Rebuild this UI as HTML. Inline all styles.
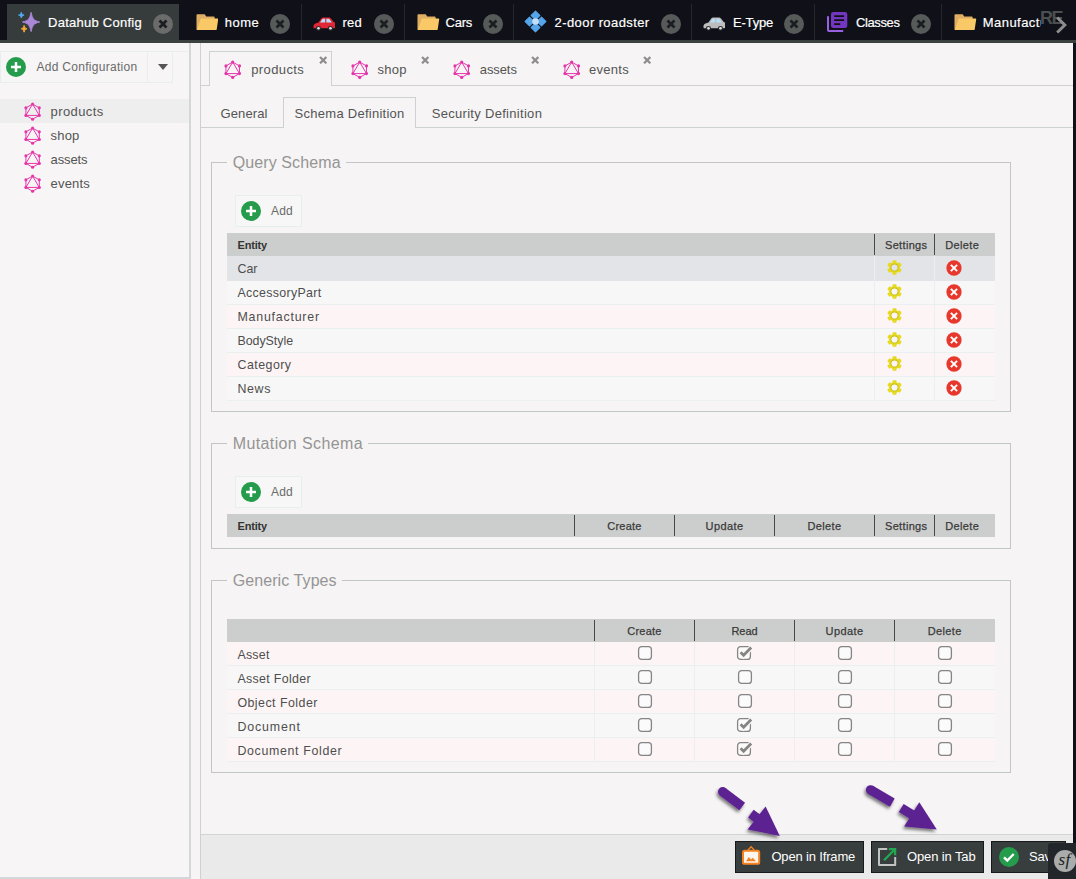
<!DOCTYPE html>
<html lang="en"><head><meta charset="utf-8"><title>Datahub Config</title>
<style>
html,body{margin:0;padding:0}
body{width:1076px;height:879px;position:relative;overflow:hidden;background:#f6f4f4;font-family:"Liberation Sans",sans-serif}
.ab{position:absolute;display:block}
.t{position:absolute;white-space:nowrap;line-height:1;margin:0;padding:0}
.sb{-webkit-text-stroke:0.25px currentColor}
.sb2{-webkit-text-stroke:0.18px currentColor}
.serif{font-family:"Liberation Serif",serif;font-style:italic}
</style></head>
<body>
<div class="ab" style="left:0;top:0;width:1076px;height:40px;background:#0f1018"></div>
<div class="ab" style="left:7px;top:4px;width:172px;height:37px;background:#363c3b"></div>
<div class="ab" style="left:0;top:40px;width:1076px;height:3px;background:#3a413f"></div>
<svg class="ab" style="left:17px;top:10px" width="25" height="24" viewBox="0 0 25 24"><path d="M14.10 2.40C15.60 9.12 16.68 10.50 22.70 12.00C16.68 13.50 15.60 14.88 14.10 21.60C12.60 14.88 11.52 13.50 5.50 12.00C11.52 10.50 12.60 9.12 14.10 2.40z" fill="#aa87d7" stroke="#aa87d7" stroke-width="1" stroke-linejoin="round"/><path d="M4.30 2.20C4.90 4.23 5.14 4.50 7.10 5.10C5.14 5.70 4.90 5.97 4.30 8.00C3.70 5.97 3.46 5.70 1.50 5.10C3.46 4.50 3.70 4.23 4.30 2.20z" fill="#55aaf0" stroke="#55aaf0" stroke-width="0.9" stroke-linejoin="round"/><path d="M7.10 15.40C7.80 17.78 7.94 18.10 9.90 18.80C7.94 19.50 7.80 19.82 7.10 22.20C6.40 19.82 6.26 19.50 4.30 18.80C6.26 18.10 6.40 17.78 7.10 15.40z" fill="#faaa32" stroke="#faaa32" stroke-width="1" stroke-linejoin="round"/></svg>
<span class="t sb2" style="left:48.00px;top:16px;font-size:13px;color:#fff;letter-spacing:0.261px">Datahub Config</span>
<svg class="ab" style="left:153px;top:14px" width="20" height="20" viewBox="0 0 20 20"><circle cx="10" cy="10" r="10" fill="#6a6b6a"/><path d="M6.500 6.500l7 7M13.500 6.500l-7 7" stroke="#1b1d20" stroke-width="2.700" fill="none"/></svg>
<div class="ab" style="left:301.0px;top:4px;width:1px;height:36px;background:#24272c"></div>
<div class="ab" style="left:404.0px;top:4px;width:1px;height:36px;background:#24272c"></div>
<div class="ab" style="left:513.0px;top:4px;width:1px;height:36px;background:#24272c"></div>
<div class="ab" style="left:691.0px;top:4px;width:1px;height:36px;background:#24272c"></div>
<div class="ab" style="left:814.0px;top:4px;width:1px;height:36px;background:#24272c"></div>
<div class="ab" style="left:941.0px;top:4px;width:1px;height:36px;background:#24272c"></div>
<svg class="ab" style="left:195.6px;top:13.7px" width="22.600" height="16.400" viewBox="0 0 23 17" preserveAspectRatio="none"><path d="M1.500 0.300h7.400l1.500 2.300h7.600a1 1 0 0 1 1 1v12.300a0.800 0.800 0 0 1-0.800 0.800h-16.900a0.800 0.800 0 0 1-0.800-0.800v-14.600a1 1 0 0 1 1-1z" fill="#dfad63"/><path d="M5.600 4.600h16.200a0.800 0.800 0 0 1 0.800 0.900l-1.500 10.400a1 1 0 0 1-1 0.800h-18.400a0.700 0.700 0 0 1-0.700-0.900l3.600-10.400a1.100 1.100 0 0 1 1-0.800z" fill="#f8c966"/></svg>
<span class="t sb2" style="left:224.70px;top:16px;font-size:13px;color:#fff;letter-spacing:0.492px">home</span>
<svg class="ab" style="left:270px;top:14px" width="20" height="20" viewBox="0 0 20 20"><circle cx="10" cy="10" r="10" fill="#565b59"/><path d="M6.500 6.500l7 7M13.500 6.500l-7 7" stroke="#1b1d20" stroke-width="2.700" fill="none"/></svg>
<svg class="ab" style="left:312.7px;top:17.2px" width="22.600" height="13.800" viewBox="0 0 23 15" preserveAspectRatio="none"><path d="M0.600 11.600c-0.600-2.600 0.600-4.600 3.400-5.200l1.600-0.500 2.800-4.200c0.600-0.900 1.400-1.200 2.400-1.200h5c1.200 0 2 0.400 2.700 1.300l2.600 3.600c1.500 0.600 1.900 1.600 1.900 3.200v2.400c0 0.800-0.500 1.200-1.200 1.200h-20c-0.700 0-1.100-0.200-1.200-0.600z" fill="#e32636"/><path d="M7.200 6l2-3.300c0.300-0.500 0.700-0.700 1.300-0.700h1.900v4zM13.600 2h2.100c0.600 0 1 0.200 1.300 0.700l2.100 3.300h-5.500z" fill="#b7dff5"/><circle cx="5.600" cy="12.300" r="2.600" fill="#2b2f33"/><circle cx="5.600" cy="12.300" r="1.300" fill="#e6e6e6"/><circle cx="17.800" cy="12.300" r="2.600" fill="#2b2f33"/><circle cx="17.800" cy="12.300" r="1.300" fill="#e6e6e6"/></svg>
<span class="t sb2" style="left:342.50px;top:16px;font-size:13px;color:#fff;letter-spacing:0.234px">red</span>
<svg class="ab" style="left:374px;top:14px" width="20" height="20" viewBox="0 0 20 20"><circle cx="10" cy="10" r="10" fill="#565b59"/><path d="M6.500 6.500l7 7M13.500 6.500l-7 7" stroke="#1b1d20" stroke-width="2.700" fill="none"/></svg>
<svg class="ab" style="left:417.1px;top:13.7px" width="22.600" height="16.400" viewBox="0 0 23 17" preserveAspectRatio="none"><path d="M1.500 0.300h7.400l1.500 2.300h7.600a1 1 0 0 1 1 1v12.300a0.800 0.800 0 0 1-0.800 0.800h-16.900a0.800 0.800 0 0 1-0.800-0.800v-14.600a1 1 0 0 1 1-1z" fill="#dfad63"/><path d="M5.600 4.600h16.200a0.800 0.800 0 0 1 0.800 0.900l-1.500 10.400a1 1 0 0 1-1 0.800h-18.400a0.700 0.700 0 0 1-0.700-0.900l3.600-10.400a1.100 1.100 0 0 1 1-0.800z" fill="#f8c966"/></svg>
<span class="t sb2" style="left:445.60px;top:16px;font-size:13px;color:#fff;letter-spacing:-0.238px">Cars</span>
<svg class="ab" style="left:483px;top:14px" width="20" height="20" viewBox="0 0 20 20"><circle cx="10" cy="10" r="10" fill="#565b59"/><path d="M6.500 6.500l7 7M13.500 6.500l-7 7" stroke="#1b1d20" stroke-width="2.700" fill="none"/></svg>
<svg class="ab" style="left:524.200px;top:10.100px" width="23" height="23" viewBox="0 0 23 23"><g fill="#55a5eb" stroke="#55a5eb" stroke-width="1.200" stroke-linejoin="round"><path d="M11.500 1.200l4.300 4.300-4.300 4.300-4.300-4.300z"/><path d="M11.500 13.200l4.300 4.300-4.300 4.300-4.300-4.300z"/><path d="M5.500 7.200l4.300 4.300-4.300 4.300-4.300-4.300z"/><path d="M17.500 7.200l4.300 4.300-4.300 4.300-4.300-4.300z"/></g><circle cx="11.500" cy="11.500" r="3.300" fill="#c3def5"/></svg>
<span class="t sb2" style="left:554.60px;top:16px;font-size:13px;color:#fff;letter-spacing:0.407px">2-door roadster</span>
<svg class="ab" style="left:661px;top:14px" width="20" height="20" viewBox="0 0 20 20"><circle cx="10" cy="10" r="10" fill="#565b59"/><path d="M6.500 6.500l7 7M13.500 6.500l-7 7" stroke="#1b1d20" stroke-width="2.700" fill="none"/></svg>
<svg class="ab" style="left:702.7px;top:17.2px" width="22.600" height="13.800" viewBox="0 0 23 15" preserveAspectRatio="none"><path d="M0.600 11.600c-0.600-2.600 0.600-4.600 3.400-5.200l1.600-0.500 2.800-4.200c0.600-0.900 1.400-1.200 2.400-1.200h5c1.200 0 2 0.400 2.700 1.300l2.600 3.600c1.500 0.600 1.900 1.600 1.900 3.200v2.400c0 0.800-0.500 1.200-1.200 1.200h-20c-0.700 0-1.100-0.200-1.200-0.600z" fill="#bdbdbd"/><path d="M7.200 6l2-3.300c0.300-0.500 0.700-0.700 1.300-0.700h1.900v4zM13.600 2h2.100c0.600 0 1 0.200 1.300 0.700l2.100 3.300h-5.500z" fill="#b7dff5"/><circle cx="5.600" cy="12.300" r="2.600" fill="#2b2f33"/><circle cx="5.600" cy="12.300" r="1.300" fill="#e6e6e6"/><circle cx="17.800" cy="12.300" r="2.600" fill="#2b2f33"/><circle cx="17.800" cy="12.300" r="1.300" fill="#e6e6e6"/></svg>
<span class="t sb2" style="left:733.00px;top:16px;font-size:13px;color:#fff;letter-spacing:-0.198px">E-Type</span>
<svg class="ab" style="left:784px;top:14px" width="20" height="20" viewBox="0 0 20 20"><circle cx="10" cy="10" r="10" fill="#565b59"/><path d="M6.500 6.500l7 7M13.500 6.500l-7 7" stroke="#1b1d20" stroke-width="2.700" fill="none"/></svg>
<svg class="ab" style="left:826px;top:12px" width="22" height="21" viewBox="0 0 22 21"><path d="M2 4.200v13.800a1 1 0 0 0 1 1h14.200" fill="none" stroke="#9a60e2" stroke-width="2"/><rect x="5" y="0" width="16.300" height="16" rx="2.200" fill="#7236c0"/><path d="M8.200 4.100h9.900M8.200 8.100h9.900M8.200 12.100h6" stroke="#0d120e" stroke-width="1.700" fill="none"/></svg>
<span class="t sb2" style="left:856.00px;top:16px;font-size:13px;color:#fff;letter-spacing:-0.393px">Classes</span>
<svg class="ab" style="left:911px;top:14px" width="20" height="20" viewBox="0 0 20 20"><circle cx="10" cy="10" r="10" fill="#565b59"/><path d="M6.500 6.500l7 7M13.500 6.500l-7 7" stroke="#1b1d20" stroke-width="2.700" fill="none"/></svg>
<svg class="ab" style="left:954.1px;top:13.7px" width="22.600" height="16.400" viewBox="0 0 23 17" preserveAspectRatio="none"><path d="M1.500 0.300h7.400l1.500 2.300h7.600a1 1 0 0 1 1 1v12.300a0.800 0.800 0 0 1-0.800 0.800h-16.900a0.800 0.800 0 0 1-0.800-0.800v-14.600a1 1 0 0 1 1-1z" fill="#dfad63"/><path d="M5.600 4.600h16.200a0.800 0.800 0 0 1 0.800 0.900l-1.500 10.400a1 1 0 0 1-1 0.800h-18.400a0.700 0.700 0 0 1-0.700-0.900l3.600-10.400a1.100 1.100 0 0 1 1-0.800z" fill="#f8c966"/></svg>
<div class="ab" style="left:982px;top:10px;width:59px;height:24px;overflow:hidden"><span class="t sb2" style="left:0.80px;top:6px;font-size:13px;color:#fff;letter-spacing:0.451px">Manufacturer</span></div>
<span class="t" style="left:1040.00px;top:9px;font-size:18px;color:#4b4f50;font-weight:700;letter-spacing:-1.508px">RE</span>
<svg class="ab" style="left:1054px;top:15px" width="14" height="20" viewBox="0 0 14 20"><path d="M3.200 2.500l7.600 7.500-7.600 7.500" fill="none" stroke="#8c8f8f" stroke-width="3"/></svg>
<div class="ab" style="left:0;top:43px;width:1073px;height:836px;background:#f6f4f4"></div>
<div class="ab" style="left:1073px;top:43px;width:3px;height:836px;background:#0f1018"></div>
<div class="ab" style="left:0;top:43px;width:189px;height:834px;background:#f7f5f5;border-right:2px solid #d4d7d7;border-bottom:2px solid #d4d7d7"></div>
<div class="ab" style="left:0;top:51px;width:189px;height:1px;background:#ecece8"></div>
<div class="ab" style="left:0;top:51px;width:148px;height:32px;border:1px solid #e6eeee;box-sizing:border-box"></div>
<div class="ab" style="left:147px;top:51px;width:26px;height:32px;border:1px solid #e6eeee;box-sizing:border-box"></div>
<svg class="ab" style="left:6px;top:57px" width="20" height="20" viewBox="0 0 20 20"><circle cx="10" cy="10" r="10" fill="#249c4c"/><path d="M10 5v10M5 10h10" stroke="#fff" stroke-width="2.500" fill="none"/></svg>
<span class="t" style="left:36.50px;top:61px;font-size:12px;color:#6a6a6a;letter-spacing:0.290px">Add Configuration</span>
<svg class="ab" style="left:158px;top:64px" width="10" height="6" viewBox="0 0 10 6"><path d="M0 0h10l-5 6z" fill="#555"/></svg>
<div class="ab" style="left:0;top:99px;width:189px;height:24px;background:#eeeeee"></div>
<svg class="ab" style="left:23.90px;top:101.77px" width="17.2" height="19.26" viewBox="0 0 20 22.4"><g fill="none" stroke="#e535ab" stroke-width="1.15"><polygon points="10,2.4 17.800,6.800 17.800,15.600 10,20 2.200,15.600 2.200,6.800"/><polygon points="10,2.400 17.800,15.600 2.200,15.600"/></g><g fill="#e535ab"><circle cx="10" cy="2.400" r="1.800"/><circle cx="17.800" cy="6.800" r="1.800"/><circle cx="17.800" cy="15.600" r="1.800"/><circle cx="10" cy="20" r="1.800"/><circle cx="2.200" cy="15.600" r="1.800"/><circle cx="2.200" cy="6.800" r="1.800"/></g></svg>
<span class="t" style="left:50.50px;top:105px;font-size:13px;color:#545454;letter-spacing:0.416px">products</span>
<svg class="ab" style="left:23.90px;top:125.77px" width="17.2" height="19.26" viewBox="0 0 20 22.4"><g fill="none" stroke="#e535ab" stroke-width="1.15"><polygon points="10,2.4 17.800,6.800 17.800,15.600 10,20 2.200,15.600 2.200,6.800"/><polygon points="10,2.400 17.800,15.600 2.200,15.600"/></g><g fill="#e535ab"><circle cx="10" cy="2.400" r="1.800"/><circle cx="17.800" cy="6.800" r="1.800"/><circle cx="17.800" cy="15.600" r="1.800"/><circle cx="10" cy="20" r="1.800"/><circle cx="2.200" cy="15.600" r="1.800"/><circle cx="2.200" cy="6.800" r="1.800"/></g></svg>
<span class="t" style="left:50.50px;top:129px;font-size:13px;color:#545454;letter-spacing:0.199px">shop</span>
<svg class="ab" style="left:23.90px;top:149.77px" width="17.2" height="19.26" viewBox="0 0 20 22.4"><g fill="none" stroke="#e535ab" stroke-width="1.15"><polygon points="10,2.4 17.800,6.800 17.800,15.600 10,20 2.200,15.600 2.200,6.800"/><polygon points="10,2.400 17.800,15.600 2.200,15.600"/></g><g fill="#e535ab"><circle cx="10" cy="2.400" r="1.800"/><circle cx="17.800" cy="6.800" r="1.800"/><circle cx="17.800" cy="15.600" r="1.800"/><circle cx="10" cy="20" r="1.800"/><circle cx="2.200" cy="15.600" r="1.800"/><circle cx="2.200" cy="6.800" r="1.800"/></g></svg>
<span class="t" style="left:50.50px;top:153px;font-size:13px;color:#545454;letter-spacing:-0.096px">assets</span>
<svg class="ab" style="left:23.90px;top:173.77px" width="17.2" height="19.26" viewBox="0 0 20 22.4"><g fill="none" stroke="#e535ab" stroke-width="1.15"><polygon points="10,2.4 17.800,6.800 17.800,15.600 10,20 2.200,15.600 2.200,6.800"/><polygon points="10,2.400 17.800,15.600 2.200,15.600"/></g><g fill="#e535ab"><circle cx="10" cy="2.400" r="1.800"/><circle cx="17.800" cy="6.800" r="1.800"/><circle cx="17.800" cy="15.600" r="1.800"/><circle cx="10" cy="20" r="1.800"/><circle cx="2.200" cy="15.600" r="1.800"/><circle cx="2.200" cy="6.800" r="1.800"/></g></svg>
<span class="t" style="left:50.50px;top:177px;font-size:13px;color:#545454;letter-spacing:0.198px">events</span>
<div class="ab" style="left:200px;top:43px;width:1px;height:836px;background:#cdd1d1"></div>
<div class="ab" style="left:201px;top:85px;width:872px;height:1px;background:#cdd1d1"></div>
<div class="ab" style="left:209px;top:51px;width:123px;height:35px;border:1px solid #cdd1d1;border-bottom:none;background:#f6f4f4;box-sizing:border-box"></div>
<svg class="ab" style="left:223.80px;top:59.56px" width="17.4" height="19.49" viewBox="0 0 20 22.4"><g fill="none" stroke="#e535ab" stroke-width="1.15"><polygon points="10,2.4 17.800,6.800 17.800,15.600 10,20 2.200,15.600 2.200,6.800"/><polygon points="10,2.400 17.800,15.600 2.200,15.600"/></g><g fill="#e535ab"><circle cx="10" cy="2.400" r="1.800"/><circle cx="17.800" cy="6.800" r="1.800"/><circle cx="17.800" cy="15.600" r="1.800"/><circle cx="10" cy="20" r="1.800"/><circle cx="2.200" cy="15.600" r="1.800"/><circle cx="2.200" cy="6.800" r="1.800"/></g></svg>
<span class="t" style="left:251.20px;top:63px;font-size:13px;color:#545454;letter-spacing:0.391px">products</span>
<svg class="ab" style="left:319px;top:56px" width="8.400" height="8.400" viewBox="0 0 8 8"><path d="M1 1l6 6M7 1l-6 6" stroke="#8d8d8d" stroke-width="2.100" fill="none"/></svg>
<svg class="ab" style="left:350.70px;top:59.56px" width="17.4" height="19.49" viewBox="0 0 20 22.4"><g fill="none" stroke="#e535ab" stroke-width="1.15"><polygon points="10,2.4 17.800,6.800 17.800,15.600 10,20 2.200,15.600 2.200,6.800"/><polygon points="10,2.400 17.800,15.600 2.200,15.600"/></g><g fill="#e535ab"><circle cx="10" cy="2.400" r="1.800"/><circle cx="17.800" cy="6.800" r="1.800"/><circle cx="17.800" cy="15.600" r="1.800"/><circle cx="10" cy="20" r="1.800"/><circle cx="2.200" cy="15.600" r="1.800"/><circle cx="2.200" cy="6.800" r="1.800"/></g></svg>
<span class="t" style="left:377.60px;top:63px;font-size:13px;color:#545454;letter-spacing:0.199px">shop</span>
<svg class="ab" style="left:421.3px;top:56px" width="8.400" height="8.400" viewBox="0 0 8 8"><path d="M1 1l6 6M7 1l-6 6" stroke="#8d8d8d" stroke-width="2.100" fill="none"/></svg>
<svg class="ab" style="left:452.70px;top:59.56px" width="17.4" height="19.49" viewBox="0 0 20 22.4"><g fill="none" stroke="#e535ab" stroke-width="1.15"><polygon points="10,2.4 17.800,6.800 17.800,15.600 10,20 2.200,15.600 2.200,6.800"/><polygon points="10,2.400 17.800,15.600 2.200,15.600"/></g><g fill="#e535ab"><circle cx="10" cy="2.400" r="1.800"/><circle cx="17.800" cy="6.800" r="1.800"/><circle cx="17.800" cy="15.600" r="1.800"/><circle cx="10" cy="20" r="1.800"/><circle cx="2.200" cy="15.600" r="1.800"/><circle cx="2.200" cy="6.800" r="1.800"/></g></svg>
<span class="t" style="left:479.80px;top:63px;font-size:13px;color:#545454;letter-spacing:-0.096px">assets</span>
<svg class="ab" style="left:530.8px;top:56px" width="8.400" height="8.400" viewBox="0 0 8 8"><path d="M1 1l6 6M7 1l-6 6" stroke="#8d8d8d" stroke-width="2.100" fill="none"/></svg>
<svg class="ab" style="left:562.70px;top:59.56px" width="17.4" height="19.49" viewBox="0 0 20 22.4"><g fill="none" stroke="#e535ab" stroke-width="1.15"><polygon points="10,2.4 17.800,6.800 17.800,15.600 10,20 2.200,15.600 2.200,6.800"/><polygon points="10,2.400 17.800,15.600 2.200,15.600"/></g><g fill="#e535ab"><circle cx="10" cy="2.400" r="1.800"/><circle cx="17.800" cy="6.800" r="1.800"/><circle cx="17.800" cy="15.600" r="1.800"/><circle cx="10" cy="20" r="1.800"/><circle cx="2.200" cy="15.600" r="1.800"/><circle cx="2.200" cy="6.800" r="1.800"/></g></svg>
<span class="t" style="left:589.00px;top:63px;font-size:13px;color:#545454;letter-spacing:0.281px">events</span>
<svg class="ab" style="left:643px;top:56px" width="8.400" height="8.400" viewBox="0 0 8 8"><path d="M1 1l6 6M7 1l-6 6" stroke="#8d8d8d" stroke-width="2.100" fill="none"/></svg>
<div class="ab" style="left:201px;top:127px;width:872px;height:1px;background:#cdd1d1"></div>
<div class="ab" style="left:283px;top:97px;width:133px;height:31px;border:1px solid #cdd1d1;border-bottom:none;background:#f6f4f4;box-sizing:border-box"></div>
<span class="t" style="left:220.50px;top:107px;font-size:13px;color:#545454;letter-spacing:0.107px">General</span>
<span class="t" style="left:294.60px;top:107px;font-size:13px;color:#545454;letter-spacing:0.265px">Schema Definition</span>
<span class="t" style="left:431.70px;top:107px;font-size:13px;color:#545454;letter-spacing:0.301px">Security Definition</span>
<div class="ab" style="left:211px;top:162px;width:800px;height:250px;border:1px solid #c3c6c8;box-sizing:border-box"></div>
<div class="ab" style="left:227px;top:160px;width:119px;height:5px;background:#f6f4f4"></div>
<span class="t" style="left:232.70px;top:155px;font-size:16px;color:#959595;letter-spacing:0.107px">Query Schema</span>
<div class="ab" style="left:235px;top:195px;width:67px;height:32px;border:1px solid #e6efef;box-sizing:border-box;background:#f7f7f7"></div>
<svg class="ab" style="left:241px;top:201px" width="20" height="20" viewBox="0 0 20 20"><circle cx="10" cy="10" r="10" fill="#249c4c"/><path d="M10 5v10M5 10h10" stroke="#fff" stroke-width="2.500" fill="none"/></svg>
<span class="t" style="left:271.00px;top:205px;font-size:12px;color:#6a6a6a;letter-spacing:0.214px">Add</span>
<div class="ab" style="left:227px;top:233px;width:768px;height:23px;background:#cccecd"></div>
<span class="t" style="left:237.50px;top:240px;font-size:11px;color:#333;font-weight:700;letter-spacing:-0.177px">Entity</span>
<div class="ab" style="left:874.0px;top:234px;width:1px;height:21px;background:#484848"></div>
<span class="t sb" style="left:885.00px;top:240px;font-size:11px;color:#3a3a3a;letter-spacing:0.331px">Settings</span>
<div class="ab" style="left:934.0px;top:234px;width:1px;height:21px;background:#484848"></div>
<span class="t sb" style="left:945.20px;top:240px;font-size:11px;color:#3a3a3a;letter-spacing:0.384px">Delete</span>
<div class="ab" style="left:227px;top:256px;width:768px;height:25px;background:#e3e4e7"></div>
<div class="ab" style="left:874px;top:256px;width:1px;height:25px;background:#eaf0f0"></div>
<div class="ab" style="left:934px;top:256px;width:1px;height:25px;background:#eaf0f0"></div>
<span class="t" style="left:237.50px;top:263px;font-size:12.4px;color:#4e4e4e;letter-spacing:0.010px">Car</span>
<svg class="ab" style="left:886.5px;top:260.3px" width="15" height="15" viewBox="0 0 16 16"><g fill="#e6d921"><circle cx="8" cy="8" r="5.900"/><rect x="5.900" y="0.200" width="4.200" height="4.500" rx="1" transform="rotate(0 8 8)"/><rect x="5.900" y="0.200" width="4.200" height="4.500" rx="1" transform="rotate(60 8 8)"/><rect x="5.900" y="0.200" width="4.200" height="4.500" rx="1" transform="rotate(120 8 8)"/><rect x="5.900" y="0.200" width="4.200" height="4.500" rx="1" transform="rotate(180 8 8)"/><rect x="5.900" y="0.200" width="4.200" height="4.500" rx="1" transform="rotate(240 8 8)"/><rect x="5.900" y="0.200" width="4.200" height="4.500" rx="1" transform="rotate(300 8 8)"/></g><circle cx="8" cy="8" r="4.300" fill="#cdbd1a"/><circle cx="8" cy="8" r="3.300" fill="#e3e4e7"/></svg>
<svg class="ab" style="left:946px;top:260px" width="16" height="16" viewBox="0 0 16 16"><circle cx="8" cy="8" r="7.650" fill="#e8372c"/><path d="M4.900 4.900l6.200 6.200M11.100 4.900l-6.200 6.200" stroke="#fff" stroke-width="2" fill="none"/></svg>
<div class="ab" style="left:227px;top:281px;width:768px;height:23px;background:#f8f7f7"></div>
<div class="ab" style="left:227px;top:304px;width:768px;height:1px;background:#eaf0f0"></div>
<div class="ab" style="left:874px;top:281px;width:1px;height:23px;background:#eaf0f0"></div>
<div class="ab" style="left:934px;top:281px;width:1px;height:23px;background:#eaf0f0"></div>
<span class="t" style="left:237.50px;top:287px;font-size:12.4px;color:#4e4e4e;letter-spacing:0.317px">AccessoryPart</span>
<svg class="ab" style="left:886.5px;top:284.3px" width="15" height="15" viewBox="0 0 16 16"><g fill="#e6d921"><circle cx="8" cy="8" r="5.900"/><rect x="5.900" y="0.200" width="4.200" height="4.500" rx="1" transform="rotate(0 8 8)"/><rect x="5.900" y="0.200" width="4.200" height="4.500" rx="1" transform="rotate(60 8 8)"/><rect x="5.900" y="0.200" width="4.200" height="4.500" rx="1" transform="rotate(120 8 8)"/><rect x="5.900" y="0.200" width="4.200" height="4.500" rx="1" transform="rotate(180 8 8)"/><rect x="5.900" y="0.200" width="4.200" height="4.500" rx="1" transform="rotate(240 8 8)"/><rect x="5.900" y="0.200" width="4.200" height="4.500" rx="1" transform="rotate(300 8 8)"/></g><circle cx="8" cy="8" r="4.300" fill="#cdbd1a"/><circle cx="8" cy="8" r="3.300" fill="#f8f7f7"/></svg>
<svg class="ab" style="left:946px;top:284px" width="16" height="16" viewBox="0 0 16 16"><circle cx="8" cy="8" r="7.650" fill="#e8372c"/><path d="M4.900 4.900l6.200 6.200M11.100 4.900l-6.200 6.200" stroke="#fff" stroke-width="2" fill="none"/></svg>
<div class="ab" style="left:227px;top:305px;width:768px;height:23px;background:#fdf5f5"></div>
<div class="ab" style="left:227px;top:328px;width:768px;height:1px;background:#eaf0f0"></div>
<div class="ab" style="left:874px;top:305px;width:1px;height:23px;background:#eaf0f0"></div>
<div class="ab" style="left:934px;top:305px;width:1px;height:23px;background:#eaf0f0"></div>
<span class="t" style="left:237.50px;top:311px;font-size:12.4px;color:#4e4e4e;letter-spacing:0.774px">Manufacturer</span>
<svg class="ab" style="left:886.5px;top:308.3px" width="15" height="15" viewBox="0 0 16 16"><g fill="#e6d921"><circle cx="8" cy="8" r="5.900"/><rect x="5.900" y="0.200" width="4.200" height="4.500" rx="1" transform="rotate(0 8 8)"/><rect x="5.900" y="0.200" width="4.200" height="4.500" rx="1" transform="rotate(60 8 8)"/><rect x="5.900" y="0.200" width="4.200" height="4.500" rx="1" transform="rotate(120 8 8)"/><rect x="5.900" y="0.200" width="4.200" height="4.500" rx="1" transform="rotate(180 8 8)"/><rect x="5.900" y="0.200" width="4.200" height="4.500" rx="1" transform="rotate(240 8 8)"/><rect x="5.900" y="0.200" width="4.200" height="4.500" rx="1" transform="rotate(300 8 8)"/></g><circle cx="8" cy="8" r="4.300" fill="#cdbd1a"/><circle cx="8" cy="8" r="3.300" fill="#fdf5f5"/></svg>
<svg class="ab" style="left:946px;top:308px" width="16" height="16" viewBox="0 0 16 16"><circle cx="8" cy="8" r="7.650" fill="#e8372c"/><path d="M4.900 4.900l6.200 6.200M11.100 4.900l-6.200 6.200" stroke="#fff" stroke-width="2" fill="none"/></svg>
<div class="ab" style="left:227px;top:329px;width:768px;height:23px;background:#f8f7f7"></div>
<div class="ab" style="left:227px;top:352px;width:768px;height:1px;background:#eaf0f0"></div>
<div class="ab" style="left:874px;top:329px;width:1px;height:23px;background:#eaf0f0"></div>
<div class="ab" style="left:934px;top:329px;width:1px;height:23px;background:#eaf0f0"></div>
<span class="t" style="left:237.50px;top:335px;font-size:12.4px;color:#4e4e4e;letter-spacing:-0.033px">BodyStyle</span>
<svg class="ab" style="left:886.5px;top:332.3px" width="15" height="15" viewBox="0 0 16 16"><g fill="#e6d921"><circle cx="8" cy="8" r="5.900"/><rect x="5.900" y="0.200" width="4.200" height="4.500" rx="1" transform="rotate(0 8 8)"/><rect x="5.900" y="0.200" width="4.200" height="4.500" rx="1" transform="rotate(60 8 8)"/><rect x="5.900" y="0.200" width="4.200" height="4.500" rx="1" transform="rotate(120 8 8)"/><rect x="5.900" y="0.200" width="4.200" height="4.500" rx="1" transform="rotate(180 8 8)"/><rect x="5.900" y="0.200" width="4.200" height="4.500" rx="1" transform="rotate(240 8 8)"/><rect x="5.900" y="0.200" width="4.200" height="4.500" rx="1" transform="rotate(300 8 8)"/></g><circle cx="8" cy="8" r="4.300" fill="#cdbd1a"/><circle cx="8" cy="8" r="3.300" fill="#f8f7f7"/></svg>
<svg class="ab" style="left:946px;top:332px" width="16" height="16" viewBox="0 0 16 16"><circle cx="8" cy="8" r="7.650" fill="#e8372c"/><path d="M4.900 4.900l6.200 6.200M11.100 4.900l-6.200 6.200" stroke="#fff" stroke-width="2" fill="none"/></svg>
<div class="ab" style="left:227px;top:353px;width:768px;height:23px;background:#fdf5f5"></div>
<div class="ab" style="left:227px;top:376px;width:768px;height:1px;background:#eaf0f0"></div>
<div class="ab" style="left:874px;top:353px;width:1px;height:23px;background:#eaf0f0"></div>
<div class="ab" style="left:934px;top:353px;width:1px;height:23px;background:#eaf0f0"></div>
<span class="t" style="left:237.50px;top:359px;font-size:12.4px;color:#4e4e4e;letter-spacing:0.465px">Category</span>
<svg class="ab" style="left:886.5px;top:356.3px" width="15" height="15" viewBox="0 0 16 16"><g fill="#e6d921"><circle cx="8" cy="8" r="5.900"/><rect x="5.900" y="0.200" width="4.200" height="4.500" rx="1" transform="rotate(0 8 8)"/><rect x="5.900" y="0.200" width="4.200" height="4.500" rx="1" transform="rotate(60 8 8)"/><rect x="5.900" y="0.200" width="4.200" height="4.500" rx="1" transform="rotate(120 8 8)"/><rect x="5.900" y="0.200" width="4.200" height="4.500" rx="1" transform="rotate(180 8 8)"/><rect x="5.900" y="0.200" width="4.200" height="4.500" rx="1" transform="rotate(240 8 8)"/><rect x="5.900" y="0.200" width="4.200" height="4.500" rx="1" transform="rotate(300 8 8)"/></g><circle cx="8" cy="8" r="4.300" fill="#cdbd1a"/><circle cx="8" cy="8" r="3.300" fill="#fdf5f5"/></svg>
<svg class="ab" style="left:946px;top:356px" width="16" height="16" viewBox="0 0 16 16"><circle cx="8" cy="8" r="7.650" fill="#e8372c"/><path d="M4.900 4.900l6.200 6.200M11.100 4.900l-6.200 6.200" stroke="#fff" stroke-width="2" fill="none"/></svg>
<div class="ab" style="left:227px;top:377px;width:768px;height:23px;background:#f8f7f7"></div>
<div class="ab" style="left:227px;top:400px;width:768px;height:1px;background:#eaf0f0"></div>
<div class="ab" style="left:874px;top:377px;width:1px;height:23px;background:#eaf0f0"></div>
<div class="ab" style="left:934px;top:377px;width:1px;height:23px;background:#eaf0f0"></div>
<span class="t" style="left:237.50px;top:383px;font-size:12.4px;color:#4e4e4e;letter-spacing:0.629px">News</span>
<svg class="ab" style="left:886.5px;top:380.3px" width="15" height="15" viewBox="0 0 16 16"><g fill="#e6d921"><circle cx="8" cy="8" r="5.900"/><rect x="5.900" y="0.200" width="4.200" height="4.500" rx="1" transform="rotate(0 8 8)"/><rect x="5.900" y="0.200" width="4.200" height="4.500" rx="1" transform="rotate(60 8 8)"/><rect x="5.900" y="0.200" width="4.200" height="4.500" rx="1" transform="rotate(120 8 8)"/><rect x="5.900" y="0.200" width="4.200" height="4.500" rx="1" transform="rotate(180 8 8)"/><rect x="5.900" y="0.200" width="4.200" height="4.500" rx="1" transform="rotate(240 8 8)"/><rect x="5.900" y="0.200" width="4.200" height="4.500" rx="1" transform="rotate(300 8 8)"/></g><circle cx="8" cy="8" r="4.300" fill="#cdbd1a"/><circle cx="8" cy="8" r="3.300" fill="#f8f7f7"/></svg>
<svg class="ab" style="left:946px;top:380px" width="16" height="16" viewBox="0 0 16 16"><circle cx="8" cy="8" r="7.650" fill="#e8372c"/><path d="M4.900 4.900l6.200 6.200M11.100 4.900l-6.200 6.200" stroke="#fff" stroke-width="2" fill="none"/></svg>
<div class="ab" style="left:211px;top:443px;width:800px;height:106px;border:1px solid #c3c6c8;box-sizing:border-box"></div>
<div class="ab" style="left:227px;top:441px;width:141.3px;height:5px;background:#f6f4f4"></div>
<span class="t" style="left:232.70px;top:436px;font-size:16px;color:#959595;letter-spacing:0.386px">Mutation Schema</span>
<div class="ab" style="left:235px;top:476px;width:67px;height:32px;border:1px solid #e6efef;box-sizing:border-box;background:#f7f7f7"></div>
<svg class="ab" style="left:241px;top:482px" width="20" height="20" viewBox="0 0 20 20"><circle cx="10" cy="10" r="10" fill="#249c4c"/><path d="M10 5v10M5 10h10" stroke="#fff" stroke-width="2.500" fill="none"/></svg>
<span class="t" style="left:271.00px;top:486px;font-size:12px;color:#6a6a6a;letter-spacing:0.214px">Add</span>
<div class="ab" style="left:227px;top:514px;width:768px;height:23px;background:#cccecd"></div>
<span class="t" style="left:237.50px;top:521px;font-size:11px;color:#333;font-weight:700;letter-spacing:-0.177px">Entity</span>
<div class="ab" style="left:574.0px;top:515px;width:1px;height:21px;background:#484848"></div>
<span class="t sb" style="left:607.35px;top:521px;font-size:11px;color:#3a3a3a;letter-spacing:0.211px">Create</span>
<div class="ab" style="left:674.0px;top:515px;width:1px;height:21px;background:#484848"></div>
<span class="t sb" style="left:705.60px;top:521px;font-size:11px;color:#3a3a3a;letter-spacing:0.386px">Update</span>
<div class="ab" style="left:774.0px;top:515px;width:1px;height:21px;background:#484848"></div>
<span class="t sb" style="left:807.45px;top:521px;font-size:11px;color:#3a3a3a;letter-spacing:0.384px">Delete</span>
<div class="ab" style="left:874.0px;top:515px;width:1px;height:21px;background:#484848"></div>
<span class="t sb" style="left:885.00px;top:521px;font-size:11px;color:#3a3a3a;letter-spacing:0.331px">Settings</span>
<div class="ab" style="left:934.0px;top:515px;width:1px;height:21px;background:#484848"></div>
<span class="t sb" style="left:945.20px;top:521px;font-size:11px;color:#3a3a3a;letter-spacing:0.384px">Delete</span>
<div class="ab" style="left:211px;top:580px;width:800px;height:193px;border:1px solid #c3c6c8;box-sizing:border-box"></div>
<div class="ab" style="left:227px;top:578px;width:115px;height:5px;background:#f6f4f4"></div>
<span class="t" style="left:232.70px;top:573px;font-size:16px;color:#959595;letter-spacing:0.087px">Generic Types</span>
<div class="ab" style="left:227px;top:619px;width:768px;height:23px;background:#cccecd"></div>
<div class="ab" style="left:594.0px;top:620px;width:1px;height:21px;background:#484848"></div>
<span class="t sb" style="left:627.35px;top:626px;font-size:11px;color:#3a3a3a;letter-spacing:0.211px">Create</span>
<div class="ab" style="left:694.0px;top:620px;width:1px;height:21px;background:#484848"></div>
<span class="t sb" style="left:731.50px;top:626px;font-size:11px;color:#3a3a3a;letter-spacing:-0.074px">Read</span>
<div class="ab" style="left:794.0px;top:620px;width:1px;height:21px;background:#484848"></div>
<span class="t sb" style="left:825.60px;top:626px;font-size:11px;color:#3a3a3a;letter-spacing:0.386px">Update</span>
<div class="ab" style="left:894.0px;top:620px;width:1px;height:21px;background:#484848"></div>
<span class="t sb" style="left:927.70px;top:626px;font-size:11px;color:#3a3a3a;letter-spacing:0.384px">Delete</span>
<div class="ab" style="left:227px;top:642px;width:768px;height:23px;background:#fdf5f5"></div>
<div class="ab" style="left:227px;top:665px;width:768px;height:1px;background:#eaf0f0"></div>
<div class="ab" style="left:594px;top:642px;width:1px;height:23px;background:#eaf0f0"></div>
<div class="ab" style="left:694px;top:642px;width:1px;height:23px;background:#eaf0f0"></div>
<div class="ab" style="left:794px;top:642px;width:1px;height:23px;background:#eaf0f0"></div>
<div class="ab" style="left:894px;top:642px;width:1px;height:23px;background:#eaf0f0"></div>
<span class="t" style="left:237.40px;top:649px;font-size:12.4px;color:#4e4e4e;letter-spacing:0.240px">Asset</span>
<svg class="ab" style="left:635.80px;top:643.90px" width="20" height="18" viewBox="0 0 20 18"><rect x="2.600" y="2.600" width="12.800" height="12.800" rx="3" fill="#fbfbfb" stroke="#858585" stroke-width="1.300"/></svg>
<svg class="ab" style="left:734.60px;top:643.90px" width="20" height="18" viewBox="0 0 20 18"><rect x="2.600" y="2.600" width="12.800" height="12.800" rx="3" fill="#fbfbfb" stroke="#858585" stroke-width="1.300"/><path d="M5.300 8.400l3.300 3.300 8.300-8.600" fill="none" stroke="#fdf5f5" stroke-width="5"/><path d="M5.600 8.300l3 3 7.600-7.800" fill="none" stroke="#858585" stroke-width="2.700"/></svg>
<svg class="ab" style="left:835.80px;top:643.90px" width="20" height="18" viewBox="0 0 20 18"><rect x="2.600" y="2.600" width="12.800" height="12.800" rx="3" fill="#fbfbfb" stroke="#858585" stroke-width="1.300"/></svg>
<svg class="ab" style="left:935.80px;top:643.90px" width="20" height="18" viewBox="0 0 20 18"><rect x="2.600" y="2.600" width="12.800" height="12.800" rx="3" fill="#fbfbfb" stroke="#858585" stroke-width="1.300"/></svg>
<div class="ab" style="left:227px;top:666px;width:768px;height:23px;background:#f8f7f7"></div>
<div class="ab" style="left:227px;top:689px;width:768px;height:1px;background:#eaf0f0"></div>
<div class="ab" style="left:594px;top:666px;width:1px;height:23px;background:#eaf0f0"></div>
<div class="ab" style="left:694px;top:666px;width:1px;height:23px;background:#eaf0f0"></div>
<div class="ab" style="left:794px;top:666px;width:1px;height:23px;background:#eaf0f0"></div>
<div class="ab" style="left:894px;top:666px;width:1px;height:23px;background:#eaf0f0"></div>
<span class="t" style="left:237.40px;top:673px;font-size:12.4px;color:#4e4e4e;letter-spacing:0.328px">Asset Folder</span>
<svg class="ab" style="left:635.80px;top:667.90px" width="20" height="18" viewBox="0 0 20 18"><rect x="2.600" y="2.600" width="12.800" height="12.800" rx="3" fill="#fbfbfb" stroke="#858585" stroke-width="1.300"/></svg>
<svg class="ab" style="left:735.80px;top:667.90px" width="20" height="18" viewBox="0 0 20 18"><rect x="2.600" y="2.600" width="12.800" height="12.800" rx="3" fill="#fbfbfb" stroke="#858585" stroke-width="1.300"/></svg>
<svg class="ab" style="left:835.80px;top:667.90px" width="20" height="18" viewBox="0 0 20 18"><rect x="2.600" y="2.600" width="12.800" height="12.800" rx="3" fill="#fbfbfb" stroke="#858585" stroke-width="1.300"/></svg>
<svg class="ab" style="left:935.80px;top:667.90px" width="20" height="18" viewBox="0 0 20 18"><rect x="2.600" y="2.600" width="12.800" height="12.800" rx="3" fill="#fbfbfb" stroke="#858585" stroke-width="1.300"/></svg>
<div class="ab" style="left:227px;top:690px;width:768px;height:23px;background:#fdf5f5"></div>
<div class="ab" style="left:227px;top:713px;width:768px;height:1px;background:#eaf0f0"></div>
<div class="ab" style="left:594px;top:690px;width:1px;height:23px;background:#eaf0f0"></div>
<div class="ab" style="left:694px;top:690px;width:1px;height:23px;background:#eaf0f0"></div>
<div class="ab" style="left:794px;top:690px;width:1px;height:23px;background:#eaf0f0"></div>
<div class="ab" style="left:894px;top:690px;width:1px;height:23px;background:#eaf0f0"></div>
<span class="t" style="left:237.40px;top:697px;font-size:12.4px;color:#4e4e4e;letter-spacing:0.471px">Object Folder</span>
<svg class="ab" style="left:635.80px;top:691.90px" width="20" height="18" viewBox="0 0 20 18"><rect x="2.600" y="2.600" width="12.800" height="12.800" rx="3" fill="#fbfbfb" stroke="#858585" stroke-width="1.300"/></svg>
<svg class="ab" style="left:735.80px;top:691.90px" width="20" height="18" viewBox="0 0 20 18"><rect x="2.600" y="2.600" width="12.800" height="12.800" rx="3" fill="#fbfbfb" stroke="#858585" stroke-width="1.300"/></svg>
<svg class="ab" style="left:835.80px;top:691.90px" width="20" height="18" viewBox="0 0 20 18"><rect x="2.600" y="2.600" width="12.800" height="12.800" rx="3" fill="#fbfbfb" stroke="#858585" stroke-width="1.300"/></svg>
<svg class="ab" style="left:935.80px;top:691.90px" width="20" height="18" viewBox="0 0 20 18"><rect x="2.600" y="2.600" width="12.800" height="12.800" rx="3" fill="#fbfbfb" stroke="#858585" stroke-width="1.300"/></svg>
<div class="ab" style="left:227px;top:714px;width:768px;height:23px;background:#f8f7f7"></div>
<div class="ab" style="left:227px;top:737px;width:768px;height:1px;background:#eaf0f0"></div>
<div class="ab" style="left:594px;top:714px;width:1px;height:23px;background:#eaf0f0"></div>
<div class="ab" style="left:694px;top:714px;width:1px;height:23px;background:#eaf0f0"></div>
<div class="ab" style="left:794px;top:714px;width:1px;height:23px;background:#eaf0f0"></div>
<div class="ab" style="left:894px;top:714px;width:1px;height:23px;background:#eaf0f0"></div>
<span class="t" style="left:237.40px;top:721px;font-size:12.4px;color:#4e4e4e;letter-spacing:0.877px">Document</span>
<svg class="ab" style="left:635.80px;top:715.90px" width="20" height="18" viewBox="0 0 20 18"><rect x="2.600" y="2.600" width="12.800" height="12.800" rx="3" fill="#fbfbfb" stroke="#858585" stroke-width="1.300"/></svg>
<svg class="ab" style="left:734.60px;top:715.90px" width="20" height="18" viewBox="0 0 20 18"><rect x="2.600" y="2.600" width="12.800" height="12.800" rx="3" fill="#fbfbfb" stroke="#858585" stroke-width="1.300"/><path d="M5.300 8.400l3.300 3.300 8.300-8.600" fill="none" stroke="#f8f7f7" stroke-width="5"/><path d="M5.600 8.300l3 3 7.600-7.800" fill="none" stroke="#858585" stroke-width="2.700"/></svg>
<svg class="ab" style="left:835.80px;top:715.90px" width="20" height="18" viewBox="0 0 20 18"><rect x="2.600" y="2.600" width="12.800" height="12.800" rx="3" fill="#fbfbfb" stroke="#858585" stroke-width="1.300"/></svg>
<svg class="ab" style="left:935.80px;top:715.90px" width="20" height="18" viewBox="0 0 20 18"><rect x="2.600" y="2.600" width="12.800" height="12.800" rx="3" fill="#fbfbfb" stroke="#858585" stroke-width="1.300"/></svg>
<div class="ab" style="left:227px;top:738px;width:768px;height:23px;background:#fdf5f5"></div>
<div class="ab" style="left:227px;top:761px;width:768px;height:1px;background:#eaf0f0"></div>
<div class="ab" style="left:594px;top:738px;width:1px;height:23px;background:#eaf0f0"></div>
<div class="ab" style="left:694px;top:738px;width:1px;height:23px;background:#eaf0f0"></div>
<div class="ab" style="left:794px;top:738px;width:1px;height:23px;background:#eaf0f0"></div>
<div class="ab" style="left:894px;top:738px;width:1px;height:23px;background:#eaf0f0"></div>
<span class="t" style="left:237.40px;top:745px;font-size:12.4px;color:#4e4e4e;letter-spacing:0.664px">Document Folder</span>
<svg class="ab" style="left:635.80px;top:739.90px" width="20" height="18" viewBox="0 0 20 18"><rect x="2.600" y="2.600" width="12.800" height="12.800" rx="3" fill="#fbfbfb" stroke="#858585" stroke-width="1.300"/></svg>
<svg class="ab" style="left:734.60px;top:739.90px" width="20" height="18" viewBox="0 0 20 18"><rect x="2.600" y="2.600" width="12.800" height="12.800" rx="3" fill="#fbfbfb" stroke="#858585" stroke-width="1.300"/><path d="M5.300 8.400l3.300 3.300 8.300-8.600" fill="none" stroke="#fdf5f5" stroke-width="5"/><path d="M5.600 8.300l3 3 7.600-7.800" fill="none" stroke="#858585" stroke-width="2.700"/></svg>
<svg class="ab" style="left:835.80px;top:739.90px" width="20" height="18" viewBox="0 0 20 18"><rect x="2.600" y="2.600" width="12.800" height="12.800" rx="3" fill="#fbfbfb" stroke="#858585" stroke-width="1.300"/></svg>
<svg class="ab" style="left:935.80px;top:739.90px" width="20" height="18" viewBox="0 0 20 18"><rect x="2.600" y="2.600" width="12.800" height="12.800" rx="3" fill="#fbfbfb" stroke="#858585" stroke-width="1.300"/></svg>
<div class="ab" style="left:201px;top:834px;width:872px;height:45px;background:#eaeaea;border-top:1px solid #d0d4d4;box-sizing:border-box"></div>
<div class="ab" style="left:735px;top:841px;width:129px;height:32px;background:#383d3e;border:1px solid #17191b;box-sizing:border-box"></div>
<div class="ab" style="left:871px;top:841px;width:113px;height:32px;background:#383d3e;border:1px solid #17191b;box-sizing:border-box"></div>
<div class="ab" style="left:991px;top:841px;width:75px;height:32px;background:#383d3e;border:1px solid #17191b;box-sizing:border-box"></div>
<svg class="ab" style="left:741px;top:845px" width="20" height="21" viewBox="0 0 20 21"><path d="M7 5l3.100-3.200 3.100 3.200" fill="none" stroke="#f58220" stroke-width="1.300"/><rect x="2" y="5.800" width="16.200" height="13" rx="1.600" fill="#fdf6ee" stroke="#f58220" stroke-width="2"/><path d="M5 16.200l2.800-4.200 2.200 2.600 1.800-1.900 3.200 3.500z" fill="#f58220"/></svg>
<span class="t" style="left:771.40px;top:850px;font-size:13px;color:#fff;letter-spacing:-0.157px">Open in Iframe</span>
<svg class="ab" style="left:877px;top:847px" width="21" height="20" viewBox="0 0 21 20"><path d="M10.200 2H2V18H18.200V10" fill="none" stroke="#c2c4c4" stroke-width="2" stroke-linejoin="round"/><path d="M7 13.200l10.600-10.600" fill="none" stroke="#22a850" stroke-width="2.200"/><path d="M11.800 2.100h6.300v6.200" fill="none" stroke="#22a850" stroke-width="2.300"/></svg>
<span class="t" style="left:907.00px;top:850px;font-size:13px;color:#fff;letter-spacing:-0.125px">Open in Tab</span>
<svg class="ab" style="left:999px;top:847px" width="20" height="20" viewBox="0 0 20 20"><circle cx="10" cy="10" r="10" fill="#249c4c"/><path d="M5 10.300l3.300 3.300 6.400-6.600" fill="none" stroke="#fff" stroke-width="2.400"/></svg>
<span class="t" style="left:1029.00px;top:850px;font-size:13px;color:#fff;letter-spacing:-0.160px">Save</span>
<div class="ab" style="left:1048px;top:843px;width:28px;height:36px;background:#22252a;border-top-left-radius:3px"></div>
<div class="ab" style="left:1054px;top:850px;width:22px;height:22px;border-radius:11px;background:#aaabab"></div>
<span class="t serif" style="left:1058.50px;top:851px;font-size:17px;color:#1c1e22;letter-spacing:0.328px">sf</span>
<svg class="ab" style="left:0;top:0" width="1076" height="879" viewBox="0 0 1076 879"><defs><filter id="sh" x="-20%" y="-20%" width="140%" height="140%"><feDropShadow dx="-1.400" dy="2.400" stdDeviation="1.500" flood-color="#000" flood-opacity="0.500"/></filter></defs><g filter="url(#sh)"><path d="M722.7 791.7L742.2 806.6" stroke="#5c2191" stroke-width="9.4" fill="none"/><circle cx="722.7" cy="791.7" r="4.7" fill="#5c2191"/><path d="M750.85 813.6L757.6 818.6" stroke="#5c2191" stroke-width="9.4" fill="none"/><polygon points="779.8,835.9 765.6,806.4 747.6,829.4" fill="#5c2191"/></g><g filter="url(#sh)"><path d="M870.6 789.9L892.3 802.6" stroke="#5c2191" stroke-width="9.4" fill="none"/><circle cx="870.6" cy="789.9" r="4.7" fill="#5c2191"/><path d="M901.2 808L912.7 815.0" stroke="#5c2191" stroke-width="9.4" fill="none"/><polygon points="936.8,829.4 919.3,802.2 904.1,826.4" fill="#5c2191"/></g></svg>
</body></html>
